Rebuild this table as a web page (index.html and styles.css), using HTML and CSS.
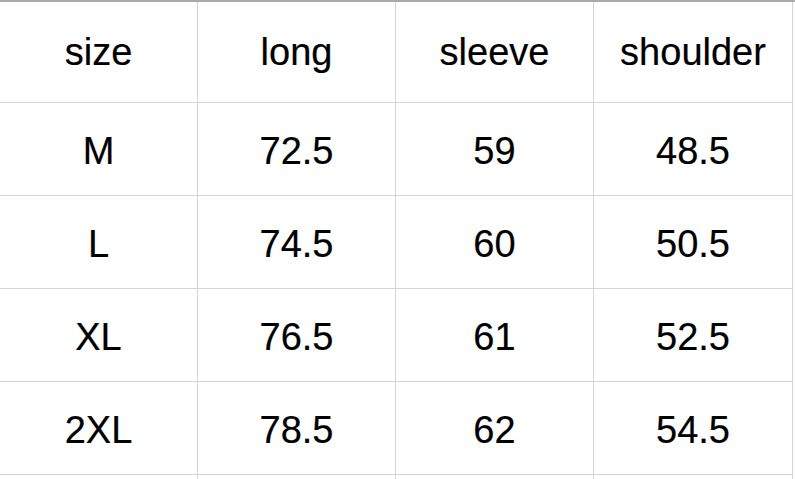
FILE: index.html
```html
<!DOCTYPE html>
<html>
<head>
<meta charset="utf-8">
<link rel="stylesheet" href="styles.css">
</head>
<body>
<div class="sheet">
  <div class="cell head">size</div><div class="cell head">long</div><div class="cell head">sleeve</div><div class="cell head">shoulder</div>
  <div class="cell">M</div><div class="cell">72.5</div><div class="cell">59</div><div class="cell">48.5</div>
  <div class="cell">L</div><div class="cell">74.5</div><div class="cell">60</div><div class="cell">50.5</div>
  <div class="cell">XL</div><div class="cell">76.5</div><div class="cell">61</div><div class="cell">52.5</div>
  <div class="cell">2XL</div><div class="cell">78.5</div><div class="cell">62</div><div class="cell">54.5</div>
  <div class="cell"></div><div class="cell"></div><div class="cell"></div><div class="cell"></div>
</div>
</body>
</html>
```
FILE: styles.css
```css
html, body {
  margin: 0;
  padding: 0;
  background: #fff;
  overflow: hidden;
}
.sheet {
  display: grid;
  grid-template-columns: 198px 198px 198px 199px;
  grid-template-rows: 101px 93px 93px 93px 93px 93px;
  height: 479px;
  box-sizing: border-box;
  overflow: hidden;
  border-top: 2px solid #a9a9a9;
  font-family: "Liberation Sans", Arial, sans-serif;
  font-size: 38px;
  color: #000;
  -webkit-text-stroke: 0.2px #000;
}
.cell {
  display: flex;
  align-items: center;
  justify-content: center;
  border-right: 1px solid #d4d4d4;
  border-bottom: 1px solid #d4d4d4;
  padding-top: 4px;
  box-sizing: border-box;
}
.head {
  padding-top: 1px;
}
```
